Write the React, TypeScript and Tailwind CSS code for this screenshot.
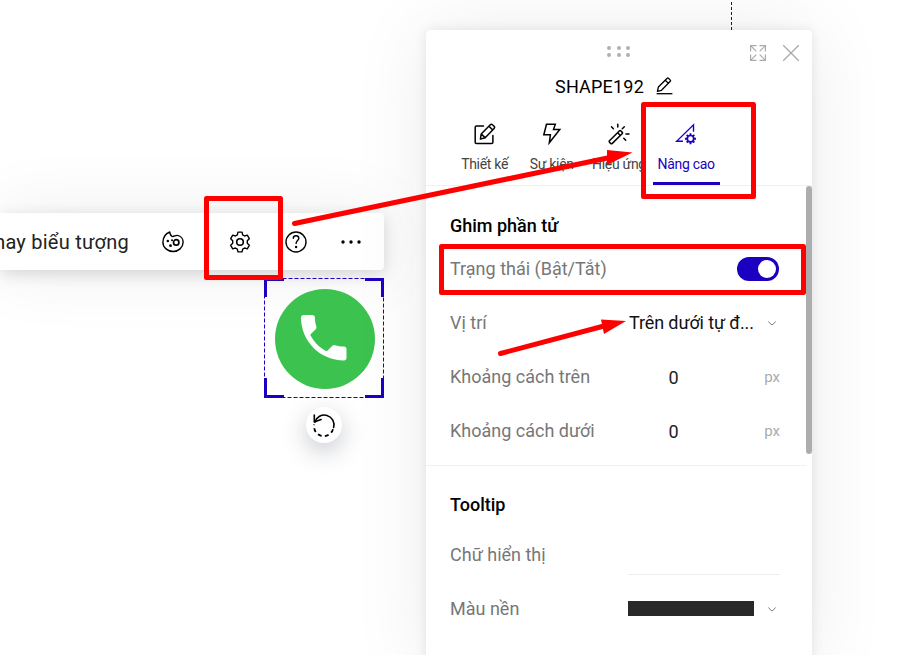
import type { ReactNode } from "react";

const stroke = {
  fill: "none",
  stroke: "currentColor",
  strokeLinecap: "round" as const,
  strokeLinejoin: "round" as const,
};

const GEAR =
  "M9 1.100h4l.7 2.800 1.900 1.100 2.700-.8 2 3.500-2 2v2.600l2 2-2 3.500-2.700-.8-1.900 1.100-.7 2.800H9l-.7-2.800-1.900-1.100-2.700.8-2-3.500 2-2V9.700l-2-2 2-3.500 2.700.8 1.900-1.100z";

function PaletteIcon() {
  return (
    <svg width="22" height="22" viewBox="0 0 22 22" {...stroke} strokeWidth="1.4">
      <path d="M7.800 1c.2 2 .6 3.600 2.200 4.300 1.900.7 3.200-1.100 5.400-.9 3.700.5 5.800 3.700 5.700 7.100-.2 5-4.600 9-9.900 9C5.700 20.500.900 16.600.9 11.300.900 6.500 3.500 2.700 7.800 1z" />
      <circle cx="14.200" cy="11.400" r="2.700" strokeWidth="1.700" />
      <g fill="currentColor" stroke="none">
        <circle cx="5.800" cy="10" r="1.250" />
        <circle cx="8.500" cy="14.700" r="1.400" />
        <circle cx="10" cy="9.300" r="1" />
      </g>
    </svg>
  );
}

function GearIcon() {
  return (
    <svg width="22" height="22" viewBox="0 0 22 22" {...stroke} strokeWidth="1.4">
      <path d={GEAR} />
      <circle cx="11" cy="11" r="3.300" strokeWidth="1.600" />
    </svg>
  );
}

function HelpIcon() {
  return (
    <svg width="22" height="22" viewBox="0 0 22 22" {...stroke} strokeWidth="1.4">
      <circle cx="11" cy="11" r="10" />
      <path d="M8.300 7.300c0-1.700 1.200-2.600 2.700-2.600 1.600 0 2.800 1 2.800 2.500 0 2.300-2.700 2.500-2.700 5.200" />
      <circle cx="11.100" cy="16" r="1.200" fill="currentColor" stroke="none" />
    </svg>
  );
}

function MoreIcon() {
  return (
    <svg width="22" height="22" viewBox="0 0 22 22" fill="currentColor">
      <circle cx="3" cy="11" r="1.700" />
      <circle cx="11" cy="11" r="1.700" />
      <circle cx="19" cy="11" r="1.700" />
    </svg>
  );
}

function DesignIcon() {
  return (
    <svg width="22" height="22" viewBox="0 0 22 22" {...stroke} strokeWidth="1.5">
      <path d="M9.500 3H2.500Q1.200 3 1.200 4.300v14.900q0 1.300 1.300 1.300h15.100q1.300 0 1.300-1.300V12.500" />
      <path d="M6.400 16.100l.8-5L16.300 1.700q1-1 2.100 0l1.700 1.600q1 1 0 2.100l-8.900 9.400zM15 3.200l3.500 3.500M7.300 11l3.700 3.600" />
    </svg>
  );
}

function BoltIcon() {
  return (
    <svg width="22" height="22" viewBox="0 0 22 22" fill="none" stroke="currentColor" strokeWidth="1.5">
      <path d="M5.500 1.200h8.800L12.500 6.500h6.300L8.300 19.800 9.400 11.800H2.800z" />
    </svg>
  );
}

function WandIcon() {
  return (
    <svg width="22" height="22" viewBox="0 0 22 22" {...stroke} strokeWidth="1.5">
      <path d="M1.500 17.800L11.300 8q.8-.8 1.700 0l1.100 1.100q.8.9 0 1.700L4.300 20.400q-.8.8-1.700 0l-1.100-1.100q-.6-.7 0-1.500zM9.600 9.700l2.800 2.800" />
      <path d="M9.800 1.200v2.900M3.500 3.700l1.900 2M16.300 3.700l-2 2M18 11.100h3M15.800 15.200l1.900 2" />
    </svg>
  );
}

function AdvancedIcon() {
  return (
    <svg width="22" height="22" viewBox="0 0 22 22" fill="none" stroke="currentColor" strokeWidth="1.4">
      <path d="M8 18.300H1.600L18.500 1.800v7" />
      <circle cx="15.500" cy="15.700" r="3.200" strokeWidth="1.700" />
      <path
        strokeWidth="1.900"
        d="M15.500 12.500v-2.300M15.500 18.900v2.300M12.300 15.700H10M18.700 15.700H21M13.200 13.400l-1.500-1.500M17.800 13.400l1.500-1.500M13.200 18l-1.500 1.500M17.800 18l1.500 1.500"
      />
    </svg>
  );
}

function PencilIcon() {
  return (
    <svg width="18" height="18" viewBox="0 0 18 18" {...stroke} strokeWidth="1.300">
      <path d="M1.400 14.300l1-4.300L11.200 1.200q.6-.6 1.200 0l1.900 1.900q.6.6 0 1.200l-8.800 9zM9.300 3.300l3.100 3.100" />
      <path d="M.6 16.700h15.800" strokeWidth="1.300" strokeLinecap="butt" />
    </svg>
  );
}

function ExpandIcon() {
  return (
    <svg width="16" height="16" viewBox="0 0 16 16" fill="none" stroke="currentColor" strokeWidth="1.200">
      <path d="M.6 6.500V.6h5.900M9.500.6h5.900v5.900M15.400 9.500v5.900H9.500M6.500 15.400H.6V9.500" />
      <path d="M.6.6l5.700 5.700M15.400.6L9.700 6.300M15.400 15.400L9.700 9.700M.6 15.400l5.700-5.700" />
    </svg>
  );
}

function CloseIcon() {
  return (
    <svg width="16" height="16" viewBox="0 0 16 16" {...stroke} strokeWidth="1.400">
      <path d="M.5.5l15 15M15.500.5l-15 15" />
    </svg>
  );
}

function ChevronIcon() {
  return (
    <svg width="8" height="5" viewBox="0 0 8 5" fill="none" stroke="#777" strokeWidth="1">
      <path d="M.3.600L4 4.100 7.700.600" />
    </svg>
  );
}

function RotateIcon() {
  return (
    <svg width="24" height="24" viewBox="0 0 24 24" {...stroke} strokeWidth="1.600">
      <path d="M2.900 9A9.700 9.700 0 0 1 21.600 14.500" />
      <path d="M2.300 2v7l6.800-2.400" />
      <path d="M21 16.200A9.700 9.700 0 0 1 2.200 11.500" strokeDasharray="4 3.200" strokeLinecap="butt" strokeWidth="1.800" />
    </svg>
  );
}

function Toolbar() {
  return (
    <div className="absolute left-0 top-[213px] flex h-[57px] w-[384px] items-center justify-end rounded-r bg-white pr-[22px] text-black shadow-[0_4px_16px_rgba(0,0,0,0.14),0_0_70px_rgba(0,0,0,0.08)]">
      <span className="mr-[33px] whitespace-nowrap text-[20px] leading-7 tracking-[0.24px] text-[#222]">
        Thay biểu tượng
      </span>
      <div className="flex items-center">
        <PaletteIcon />
        <span className="ml-[45px]"><GearIcon /></span>
        <span className="ml-[34px]"><HelpIcon /></span>
        <span className="ml-[33px]"><MoreIcon /></span>
      </div>
    </div>
  );
}

function SelectedShape() {
  return (
    <div className="absolute left-[264px] top-[278px] flex size-[120px] items-center justify-center">
      <svg className="absolute inset-0" width="120" height="120" fill="none" stroke="#1c00c2">
        <rect x=".5" y=".5" width="119" height="119" strokeDasharray="4 2" />
        <path d="M1.500 19V1.500H20M101 1.500H118.500V19M118.500 100V118.500H101M20 118.500H1.500V100" strokeWidth="3" />
      </svg>
      <div className="ml-[2.400px] mt-[2.400px] flex size-[100px] items-center justify-center rounded-full bg-[#3cc24e] pb-[2px] pr-[2px] text-white">
        <svg width="45.500" height="45.500" viewBox="3 3 18 18" fill="currentColor">
          <path d="M6.620 10.790c1.440 2.830 3.760 5.140 6.590 6.590l2.200-2.200c.270-.270.670-.360 1.020-.240 1.120.370 2.330.570 3.570.570.550 0 1 .450 1 1V20c0 .550-.450 1-1 1C10.610 21 3 13.390 3 4c0-.550.450-1 1-1h3.500c.550 0 1 .450 1 1 0 1.250.200 2.450.570 3.570.110.350.030.740-.250 1.020l-2.200 2.200z" />
        </svg>
      </div>
    </div>
  );
}

function Tab({ icon, label, active }: { icon: ReactNode; label: string; active?: boolean }) {
  return (
    <div
      className={
        "flex h-[62px] w-[67.2px] flex-col items-center border-b-[3px] whitespace-nowrap " +
        (active ? "border-[#1c00c2] text-[#1c00c2]" : "border-transparent text-black")
      }
    >
      {icon}
      <span className={"mt-[9px] text-[14px] leading-5 tracking-[-0.3px] " + (active ? "" : "text-[#444]")}>
        {label}
      </span>
    </div>
  );
}

function Row({ label, children }: { label: string; children: ReactNode }) {
  return (
    <div className="flex h-[54px] items-center">
      <span className="w-[178px] shrink-0 whitespace-nowrap text-[18px] text-[#777]">{label}</span>
      <div className="flex h-full w-[152px] items-center">{children}</div>
    </div>
  );
}

function Distance({ label }: { label: string }) {
  return (
    <Row label={label}>
      <span className="w-[91px] pt-[2px] text-center text-[18px] text-[#222]">0</span>
      <span className="ml-auto pt-[2px] text-[15px] text-[#aaa]">px</span>
    </Row>
  );
}

function SettingsPanel() {
  return (
    <div className="absolute left-[426px] top-[30px] flex h-[640px] w-[386px] flex-col rounded bg-white shadow-[0_0_12px_rgba(0,0,0,0.09),0_0_80px_rgba(0,0,0,0.08)]">
      <div className="flex h-[42px] items-center justify-end gap-[17px] pr-[13px] pt-1 text-[#aaa]">
        <div className="mr-[103px] grid grid-cols-3 gap-x-[5.500px] gap-y-[3.500px] pb-[3px]">
          {[0, 1, 2, 3, 4, 5].map((n) => (
            <i key={n} className="size-1 rounded-full bg-[#b0b0b0]" />
          ))}
        </div>
        <ExpandIcon />
        <CloseIcon />
      </div>
      <div className="flex h-7 items-center pl-[129px] text-black">
        <span className="text-[18px] tracking-[0.2px]">SHAPE192</span>
        <span className="ml-3"><PencilIcon /></span>
      </div>
      <div className="flex h-[86px] shrink-0 items-end border-b border-[#f0f0f0] pl-[25px]">
        <Tab icon={<DesignIcon />} label="Thiết kế" />
        <Tab icon={<BoltIcon />} label="Sự kiện" />
        <Tab icon={<WandIcon />} label="Hiệu ứng" />
        <Tab icon={<AdvancedIcon />} label="Nâng cao" active />
      </div>
      <div className="flex">
        <div className="flex w-[380px] flex-col">
          <section className="flex h-[280px] flex-col border-b border-[#f0f0f0] px-6 pt-[24px]">
            <h2 className="h-[31px] text-[18px] font-medium leading-8 text-black">Ghim phần tử</h2>
            <Row label="Trạng thái (Bật/Tắt)">
              <div className="ml-auto mr-px mt-[2px] flex h-6 w-[42px] items-center justify-end rounded-full bg-[#1c00c2] pr-[3px]">
                <div className="size-[18px] rounded-full bg-white" />
              </div>
            </Row>
            <Row label="Vị trí">
              <span className="whitespace-nowrap pl-px pt-px text-[18px] tracking-[-0.12px] text-[#111]">
                Trên dưới tự đ...
              </span>
              <span className="ml-auto mr-1 pt-[2px]"><ChevronIcon /></span>
            </Row>
            <Distance label="Khoảng cách trên" />
            <Distance label="Khoảng cách dưới" />
          </section>
          <section className="flex flex-col px-6 pt-[23px]">
            <h2 className="h-[38px] text-[18px] font-medium leading-8 text-black">Tooltip</h2>
            <Row label="Chữ hiển thị">
              <div className="mt-[-5px] h-[47px] w-full border-b border-[#eee]" />
            </Row>
            <Row label="Màu nền">
              <div className="h-[15px] w-[126px] bg-[#292929]" />
              <span className="ml-auto mr-1 pt-[3px]"><ChevronIcon /></span>
            </Row>
          </section>
        </div>
        <div className="h-[268px] w-1.5 rounded-full bg-[#adadad]" />
      </div>
    </div>
  );
}

function Annotations() {
  return (
    <svg className="absolute inset-0" width="914" height="655" fill="none" stroke="#f00">
      <g strokeWidth="5" strokeLinejoin="round">
        <rect x="206.500" y="198.500" width="74" height="79" />
        <rect x="643.500" y="104.500" width="110" height="92" />
        <rect x="441.500" y="246.500" width="362" height="46" />
      </g>
      <g strokeWidth="5" strokeLinecap="round">
        <path d="M294.500 223.500L610 157.500M500.500 353.500L604 326" />
      </g>
      <g fill="#f00" stroke="none">
        <path d="M607 150l25.500 2.500-25.500 12.500z" />
        <path d="M601 319.500l25 1.500-22 13z" />
      </g>
    </svg>
  );
}

export default function App() {
  return (
    <main className="relative h-[655px] w-[914px] overflow-hidden bg-white font-[Roboto,'Noto_Sans',sans-serif]">
      <div className="absolute left-[731px] top-[2px] h-7 w-px bg-[repeating-linear-gradient(to_bottom,#1c00c2_0_3px,transparent_3px_5px)]" />
      <Toolbar />
      <SelectedShape />
      <div className="absolute left-[306px] top-[407px] flex size-9 items-center justify-center rounded-full bg-white pb-px text-black shadow-[0_8px_24px_rgba(30,40,60,0.25)]">
        <RotateIcon />
      </div>
      <SettingsPanel />
      <Annotations />
    </main>
  );
}
